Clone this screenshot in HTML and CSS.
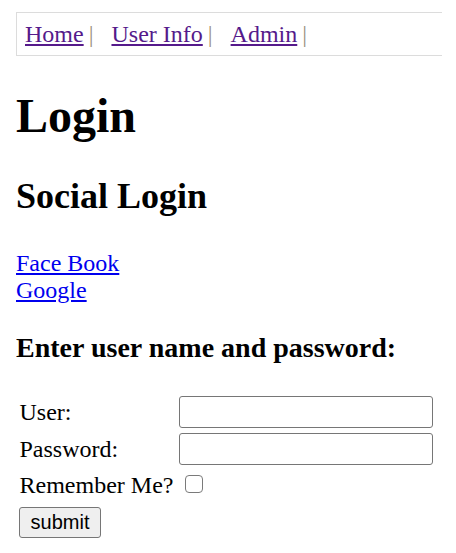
FILE: index.html
```html
<!DOCTYPE html>
<html>
<head>
<meta charset="utf-8">
<link rel="stylesheet" href="styles.css">
<title>Login</title>
</head>
<body>
<nav class="topnav">
  <span class="nav-item"><a class="visited" href="#">Home</a><span class="sep">|</span></span>
  <span class="nav-item"><a class="visited" href="#">User Info</a><span class="sep">|</span></span>
  <span class="nav-item"><a class="visited" href="#">Admin</a><span class="sep">|</span></span>
</nav>
<h1 class="title">Login</h1>
<h2 class="subtitle">Social Login</h2>
<div class="social">
  <a class="link" href="#">Face Book</a><br>
  <a class="link" href="#">Google</a>
</div>
<h3 class="form-title">Enter user name and password:</h3>
<form class="login-form">
  <table class="form-table">
    <tr>
      <td class="label">User:</td>
      <td><input class="text-input" type="text" name="username"></td>
    </tr>
    <tr>
      <td class="label">Password:</td>
      <td><input class="text-input" type="password" name="password"></td>
    </tr>
    <tr class="remember-row">
      <td class="label">Remember Me?</td>
      <td><input class="check" type="checkbox" name="remember"></td>
    </tr>
    <tr>
      <td class="submit-cell" colspan="2"><button class="submit-btn" type="button">submit</button></td>
    </tr>
  </table>
</form>
</body>
</html>
```
FILE: styles.css
```css
html, body {
  overflow: hidden;
}
body {
  margin: 12px 14px 0 16px;
  font-family: "Liberation Serif", "Times New Roman", serif;
  font-size: 24px;
  color: #000;
  background: #fff;
}
.topnav {
  display: flex;
  gap: 18px;
  align-items: baseline;
  padding: 7px 8px;
  border: 1px solid #dcdcdc;
  border-right: none;
  line-height: 28px;
}
.nav-item {
  white-space: nowrap;
}
.sep {
  color: #9a9080;
  margin-left: 5px;
}
a {
  color: #0000ee;
}
a.visited {
  color: #551a8b;
}
.title {
  font-size: 48px;
  margin: 32px 0;
}
.subtitle {
  font-size: 36px;
  margin: 30px 0;
}
.social {
  margin: 33px 0 0;
  line-height: 27px;
}
.form-title {
  font-size: 28px;
  margin: 28px 0;
}
.login-form {
  margin: 0;
}
.form-table {
  border-spacing: 3px;
  margin-left: -1px;
}
.form-table td {
  padding: 1px 1.5px;
  font-size: 24px;
}
.remember-row td {
  height: 30px;
}
.form-table td.submit-cell {
  padding: 3px 1.5px 1px 1px;
}
.text-input {
  box-sizing: border-box;
  width: 254px;
  height: 32px;
  margin: 0;
  border: 1px solid #767676;
  border-radius: 3px;
  background: #fff;
  font-family: "Liberation Sans", Arial, sans-serif;
  font-size: 20px;
  vertical-align: middle;
}
.check {
  appearance: none;
  -webkit-appearance: none;
  box-sizing: border-box;
  width: 18px;
  height: 18px;
  margin: 0 0 5px 6px;
  border: 1.5px solid #7a7a7a;
  border-radius: 4px;
  background: #fff;
  vertical-align: middle;
}
.submit-btn {
  box-sizing: border-box;
  width: 82px;
  height: 31px;
  margin: 0;
  padding: 0;
  border: 1px solid #767676;
  border-radius: 3px;
  background: #efefef;
  font-family: "Liberation Sans", Arial, sans-serif;
  font-size: 20px;
  color: #000;
}
```
